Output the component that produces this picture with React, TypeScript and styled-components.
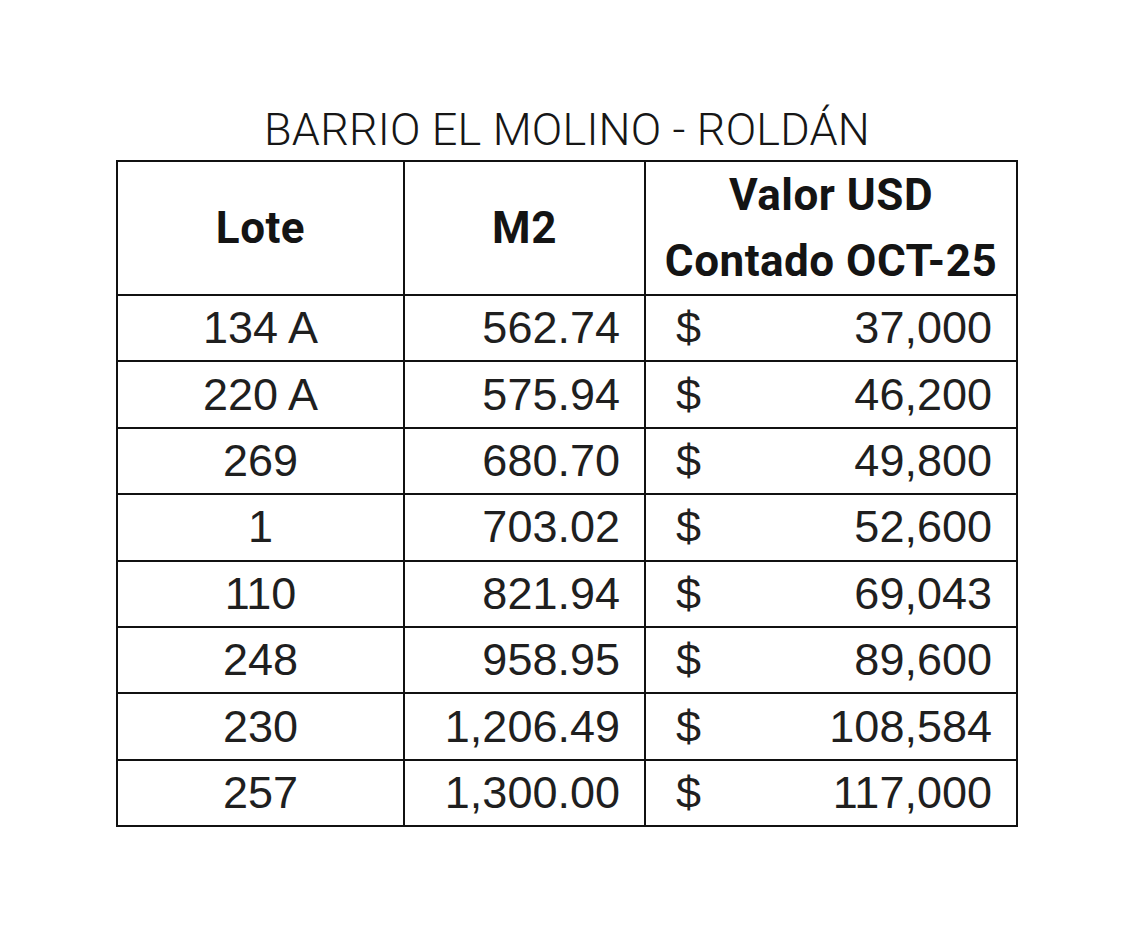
import React from 'react';
import styled, { createGlobalStyle } from 'styled-components';

const GlobalStyle = createGlobalStyle`
  html, body {
    margin: 0;
    padding: 0;
    background: #ffffff;
  }
  body {
    font-family: 'Liberation Sans', Arial, sans-serif;
    color: #1a1a1a;
  }
`;

const Page = styled.div`
  width: 1148px;
  height: 950px;
  display: flex;
  flex-direction: column;
  align-items: center;
  padding-top: 102px;
  padding-right: 14px;
  box-sizing: border-box;
`;

const Title = styled.div`
  font-family: 'Roboto', 'Liberation Sans', sans-serif;
  font-weight: 300;
  font-size: 45px;
  line-height: 56px;
  height: 58px;
  letter-spacing: 0.2px;
  color: #161616;
  text-align: center;
`;

const Table = styled.table`
  width: 900px;
  border-collapse: collapse;
  table-layout: fixed;
  border: 2px solid #111;
`;

const HeadCell = styled.th`
  height: 131px;
  padding: 0;
  border: 2px solid #111;
  font-family: 'Roboto', 'Liberation Sans', sans-serif;
  font-weight: 700;
  font-size: 44px;
  line-height: 66px;
  letter-spacing: 0.5px;
  color: #141414;
  text-align: center;
  vertical-align: middle;
`;

const Cell = styled.td<{ $align?: 'left' | 'center' | 'right' }>`
  height: 64.4px;
  padding: 0 24px;
  border: 2px solid #111;
  font-size: 45px;
  line-height: 60px;
  color: #1f1f1f;
  text-align: ${(p) => p.$align || 'center'};
  vertical-align: middle;
`;

const Money = styled.div`
  display: flex;
  justify-content: space-between;
  padding-left: 6px;
`;

const rows = [
  { lote: '134 A', m2: '562.74', valor: '37,000' },
  { lote: '220 A', m2: '575.94', valor: '46,200' },
  { lote: '269', m2: '680.70', valor: '49,800' },
  { lote: '1', m2: '703.02', valor: '52,600' },
  { lote: '110', m2: '821.94', valor: '69,043' },
  { lote: '248', m2: '958.95', valor: '89,600' },
  { lote: '230', m2: '1,206.49', valor: '108,584' },
  { lote: '257', m2: '1,300.00', valor: '117,000' },
];

export default function App() {
  return (
    <>
      <GlobalStyle />
      <Page>
        <Title>BARRIO EL MOLINO - ROLDÁN</Title>
        <Table>
          <colgroup>
            <col style={{ width: 287 }} />
            <col style={{ width: 241 }} />
            <col style={{ width: 372 }} />
          </colgroup>
          <thead>
            <tr>
              <HeadCell>Lote</HeadCell>
              <HeadCell>M2</HeadCell>
              <HeadCell>
                Valor USD
                <br />
                Contado OCT-25
              </HeadCell>
            </tr>
          </thead>
          <tbody>
            {rows.map((r) => (
              <tr key={r.lote}>
                <Cell>{r.lote}</Cell>
                <Cell $align="right">{r.m2}</Cell>
                <Cell>
                  <Money>
                    <span>$</span>
                    <span>{r.valor}</span>
                  </Money>
                </Cell>
              </tr>
            ))}
          </tbody>
        </Table>
      </Page>
    </>
  );
}
